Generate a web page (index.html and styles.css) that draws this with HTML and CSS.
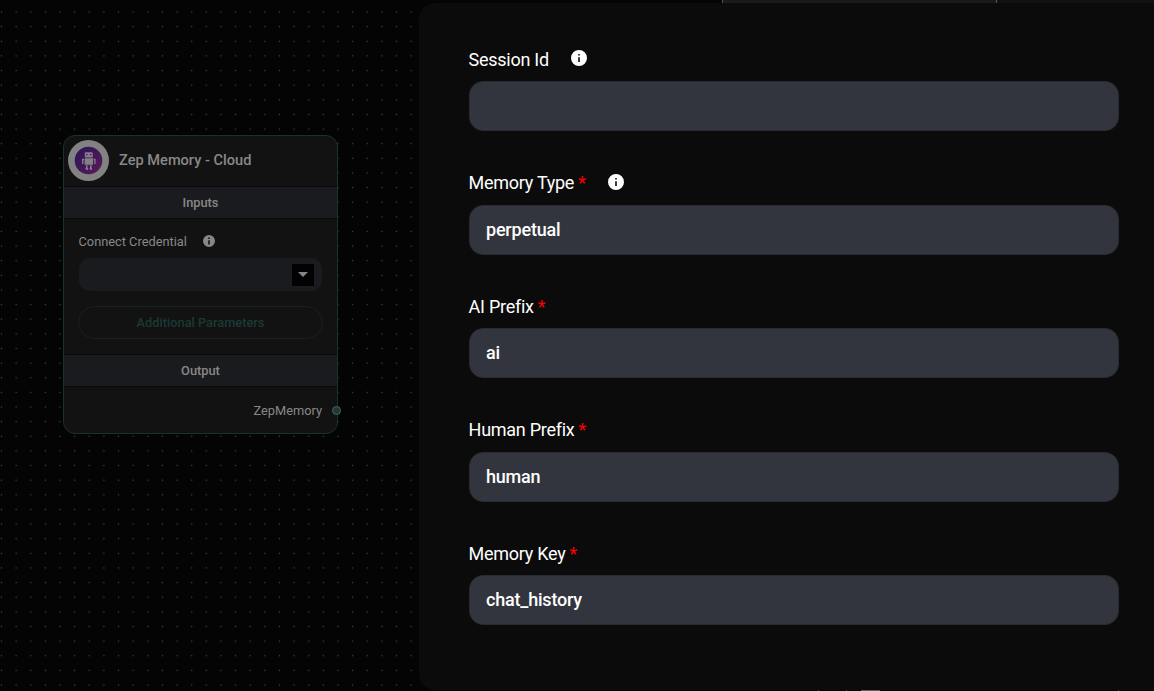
FILE: index.html
```html
<!DOCTYPE html>
<html lang="en">
<head>
<meta charset="utf-8">
<title>Zep Memory - Cloud</title>
<link rel="stylesheet" href="styles.css">
</head>
<body>
<div class="app">
  <svg class="grid" width="419" height="691">
    <defs>
      <pattern id="dots" x="-5.8" y="4.7" width="14.63" height="14.63" patternUnits="userSpaceOnUse">
        <circle cx="7.3" cy="7.3" r="0.75" fill="#444"/>
      </pattern>
    </defs>
    <rect width="419" height="691" fill="url(#dots)"/>
  </svg>
  <div class="top-edge"><span class="top-card"></span><span class="top-rest"></span></div>
  <div class="bottom-edge"><i class="tick t1"></i><i class="tick t2"></i><i class="tab"></i><i class="tick t3"></i></div>

  <section class="node">
    <header class="node-head">
      <span class="avatar">
        <svg width="41" height="41" viewBox="0 0 41 41">
          <defs><linearGradient id="purple" x1="0" y1="0" x2="1" y2="1"><stop offset="0" stop-color="#2b1459"/><stop offset="1" stop-color="#5b1b59"/></linearGradient></defs>
          <circle cx="20.5" cy="20.5" r="20.5" fill="#828282"/>
          <circle cx="20.5" cy="20.5" r="13.8" fill="url(#purple)"/>
          <g fill="#858085">
            <path fill-rule="evenodd" d="M17.8 12.2h6q1 0 1 1v3.2q0 1-1 1h-6q-1 0-1-1v-3.2q0-1 1-1zM18.2 14v1.3h1.4V14zm3.9 0v1.3h1.4V14z"/>
            <path d="M16.6 18.2h8.4v6.6h-8.4zM14 18.7h2v1.5h-.6V24H14zM25.6 18.7h2V24h-1.3v-3.8h-.7zM18 25.2h1.6V28h.5v1.8h-2.5V28h.4zM22 25.2h1.6V28h.5v1.8h-2.5V28h.4z"/>
          </g>
        </svg>
      </span>
      <h1>Zep Memory - Cloud</h1>
    </header>
    <h2 class="band">Inputs</h2>
    <div class="inputs">
      <div class="cred">Connect Credential
        <svg class="info-small" width="12" height="12" viewBox="0 0 24 24"><path fill="#878787" fill-rule="evenodd" d="M12 0a12 12 0 1 0 0 24 12 12 0 0 0 0-24zM10.4 5h3.2v3h-3.2zM10.4 10.5h3.2V19h-3.2z"/></svg>
      </div>
      <div class="select"><span class="arrow"><svg width="10" height="5" viewBox="0 0 10 5"><path d="M0 0h10L5 5z" fill="#858585"/></svg></span></div>
      <div class="more">Additional Parameters</div>
    </div>
    <h2 class="band">Output</h2>
    <div class="output">ZepMemory<span class="port"></span></div>
  </section>

  <main class="panel">
    <div class="field"><div class="label">Session Id<svg class="info" width="16" height="16" viewBox="0 0 24 24"><path fill="#fff" fill-rule="evenodd" d="M12 0a12 12 0 1 0 0 24 12 12 0 0 0 0-24zM10.8 6h2.4v2.4h-2.4zM10.8 10.8h2.4V18h-2.4z"/></svg></div><div class="input"></div></div>
    <div class="field"><div class="label">Memory Type<b>*</b><svg class="info" width="16" height="16" viewBox="0 0 24 24"><path fill="#fff" fill-rule="evenodd" d="M12 0a12 12 0 1 0 0 24 12 12 0 0 0 0-24zM10.8 6h2.4v2.4h-2.4zM10.8 10.8h2.4V18h-2.4z"/></svg></div><div class="input">perpetual</div></div>
    <div class="field"><div class="label">AI Prefix<b>*</b></div><div class="input">ai</div></div>
    <div class="field"><div class="label">Human Prefix<b>*</b></div><div class="input">human</div></div>
    <div class="field"><div class="label">Memory Key<b>*</b></div><div class="input">chat_history</div></div>
  </main>
</div>
</body>
</html>
```

FILE: styles.css
```css
* { box-sizing: border-box; }
body { margin: 0; background: #040404; font-family: Roboto, sans-serif; }
h1, h2 { margin: 0; }
svg { display: block; }
.app { position: relative; width: 1154px; height: 691px; overflow: hidden; display: flex; }
.grid { position: absolute; left: 0; top: 0; }

/* Slivers of the canvas visible around the dialog */
.top-edge { position: absolute; left: 722px; right: 0; top: 0; height: 3px; display: flex; }
.top-card { width: 275px; background: #1a1a1a; border: solid #555; border-width: 0 1px; }
.top-rest { flex: 1; background: #121212; }
.bottom-edge { position: absolute; left: 0; right: 0; bottom: 0; height: 1px; background: #020202; }
.tick { position: absolute; width: 1px; height: 1px; background: #444; }
.t1 { left: 818px; }
.t2 { left: 846px; }
.t3 { left: 1118px; }
.tab { position: absolute; left: 861px; width: 19px; height: 1px; background: #606060; }

.node {
  position: absolute; left: 63px; top: 135px; width: 275px; height: 299px;
  border: 1px solid #17332e; border-radius: 12px; background: #121212; color: #888;
}
.node-head { height: 50px; display: flex; align-items: center; padding-left: 4px; gap: 10px; }
.avatar { margin-bottom: 2px; }
.node-head h1 { font-size: 14.6px; font-weight: 500; line-height: 20px; padding-bottom: 2px; }
.band {
  height: 33px; background: #1a1b1f; border: solid #0b0b0b; border-width: 1px 0;
  font-size: 12.8px; font-weight: 500; line-height: 32px; text-align: center;
}
.inputs { height: 135px; padding: 15px 14px 0; }
.cred { display: flex; align-items: center; gap: 16px; height: 15px; font-size: 12.8px; padding-left: .5px; }
.info-small { margin-bottom: 2px; }
.select {
  display: flex; align-items: center; justify-content: flex-end; height: 33px; width: 243px;
  margin: 9px 0 15px 1px; padding-right: 8px; border-radius: 11px; background: #1a1b1f;
}
.arrow { width: 22px; height: 22px; background: #020202; display: grid; place-items: center; }
.more {
  height: 33px; border: 1px solid #15231f; border-radius: 17px; color: #193a34;
  font-size: 12.8px; font-weight: 500; line-height: 31px; text-align: center;
}
.output {
  position: relative; height: 46px; padding-right: 15px; font-size: 12.8px;
  line-height: 47px; text-align: right;
}
.port {
  position: absolute; right: -4px; top: 18.5px; width: 9px; height: 9px;
  border: 1px solid #555d5b; border-radius: 50%; background: #1b3c36;
}

.panel {
  position: relative; width: 735px; height: 687px; margin: 3px 0 0 419px;
  padding: 45.8px 35px 0 50px; border-radius: 16px 0 0 16px; background: #0b0b0b; color: #fff;
  display: flex; flex-direction: column; gap: 41px;
}
.field { flex: none; height: 82.5px; }
.label {
  display: flex; align-items: center; height: 21px; margin: 0 0 11.3px -.4px;
  font-size: 18px; letter-spacing: -.27px;
}
.label b { margin-left: 4px; color: #f00; font-weight: 400; }
.info { margin: 0 0 2px 22px; }
.input {
  height: 50.3px; border: 1px solid #292b30; border-radius: 14px; background: #32353d;
  padding: 0 16px; font-size: 18px; font-weight: 500; line-height: 48px; letter-spacing: -.2px;
}
```
